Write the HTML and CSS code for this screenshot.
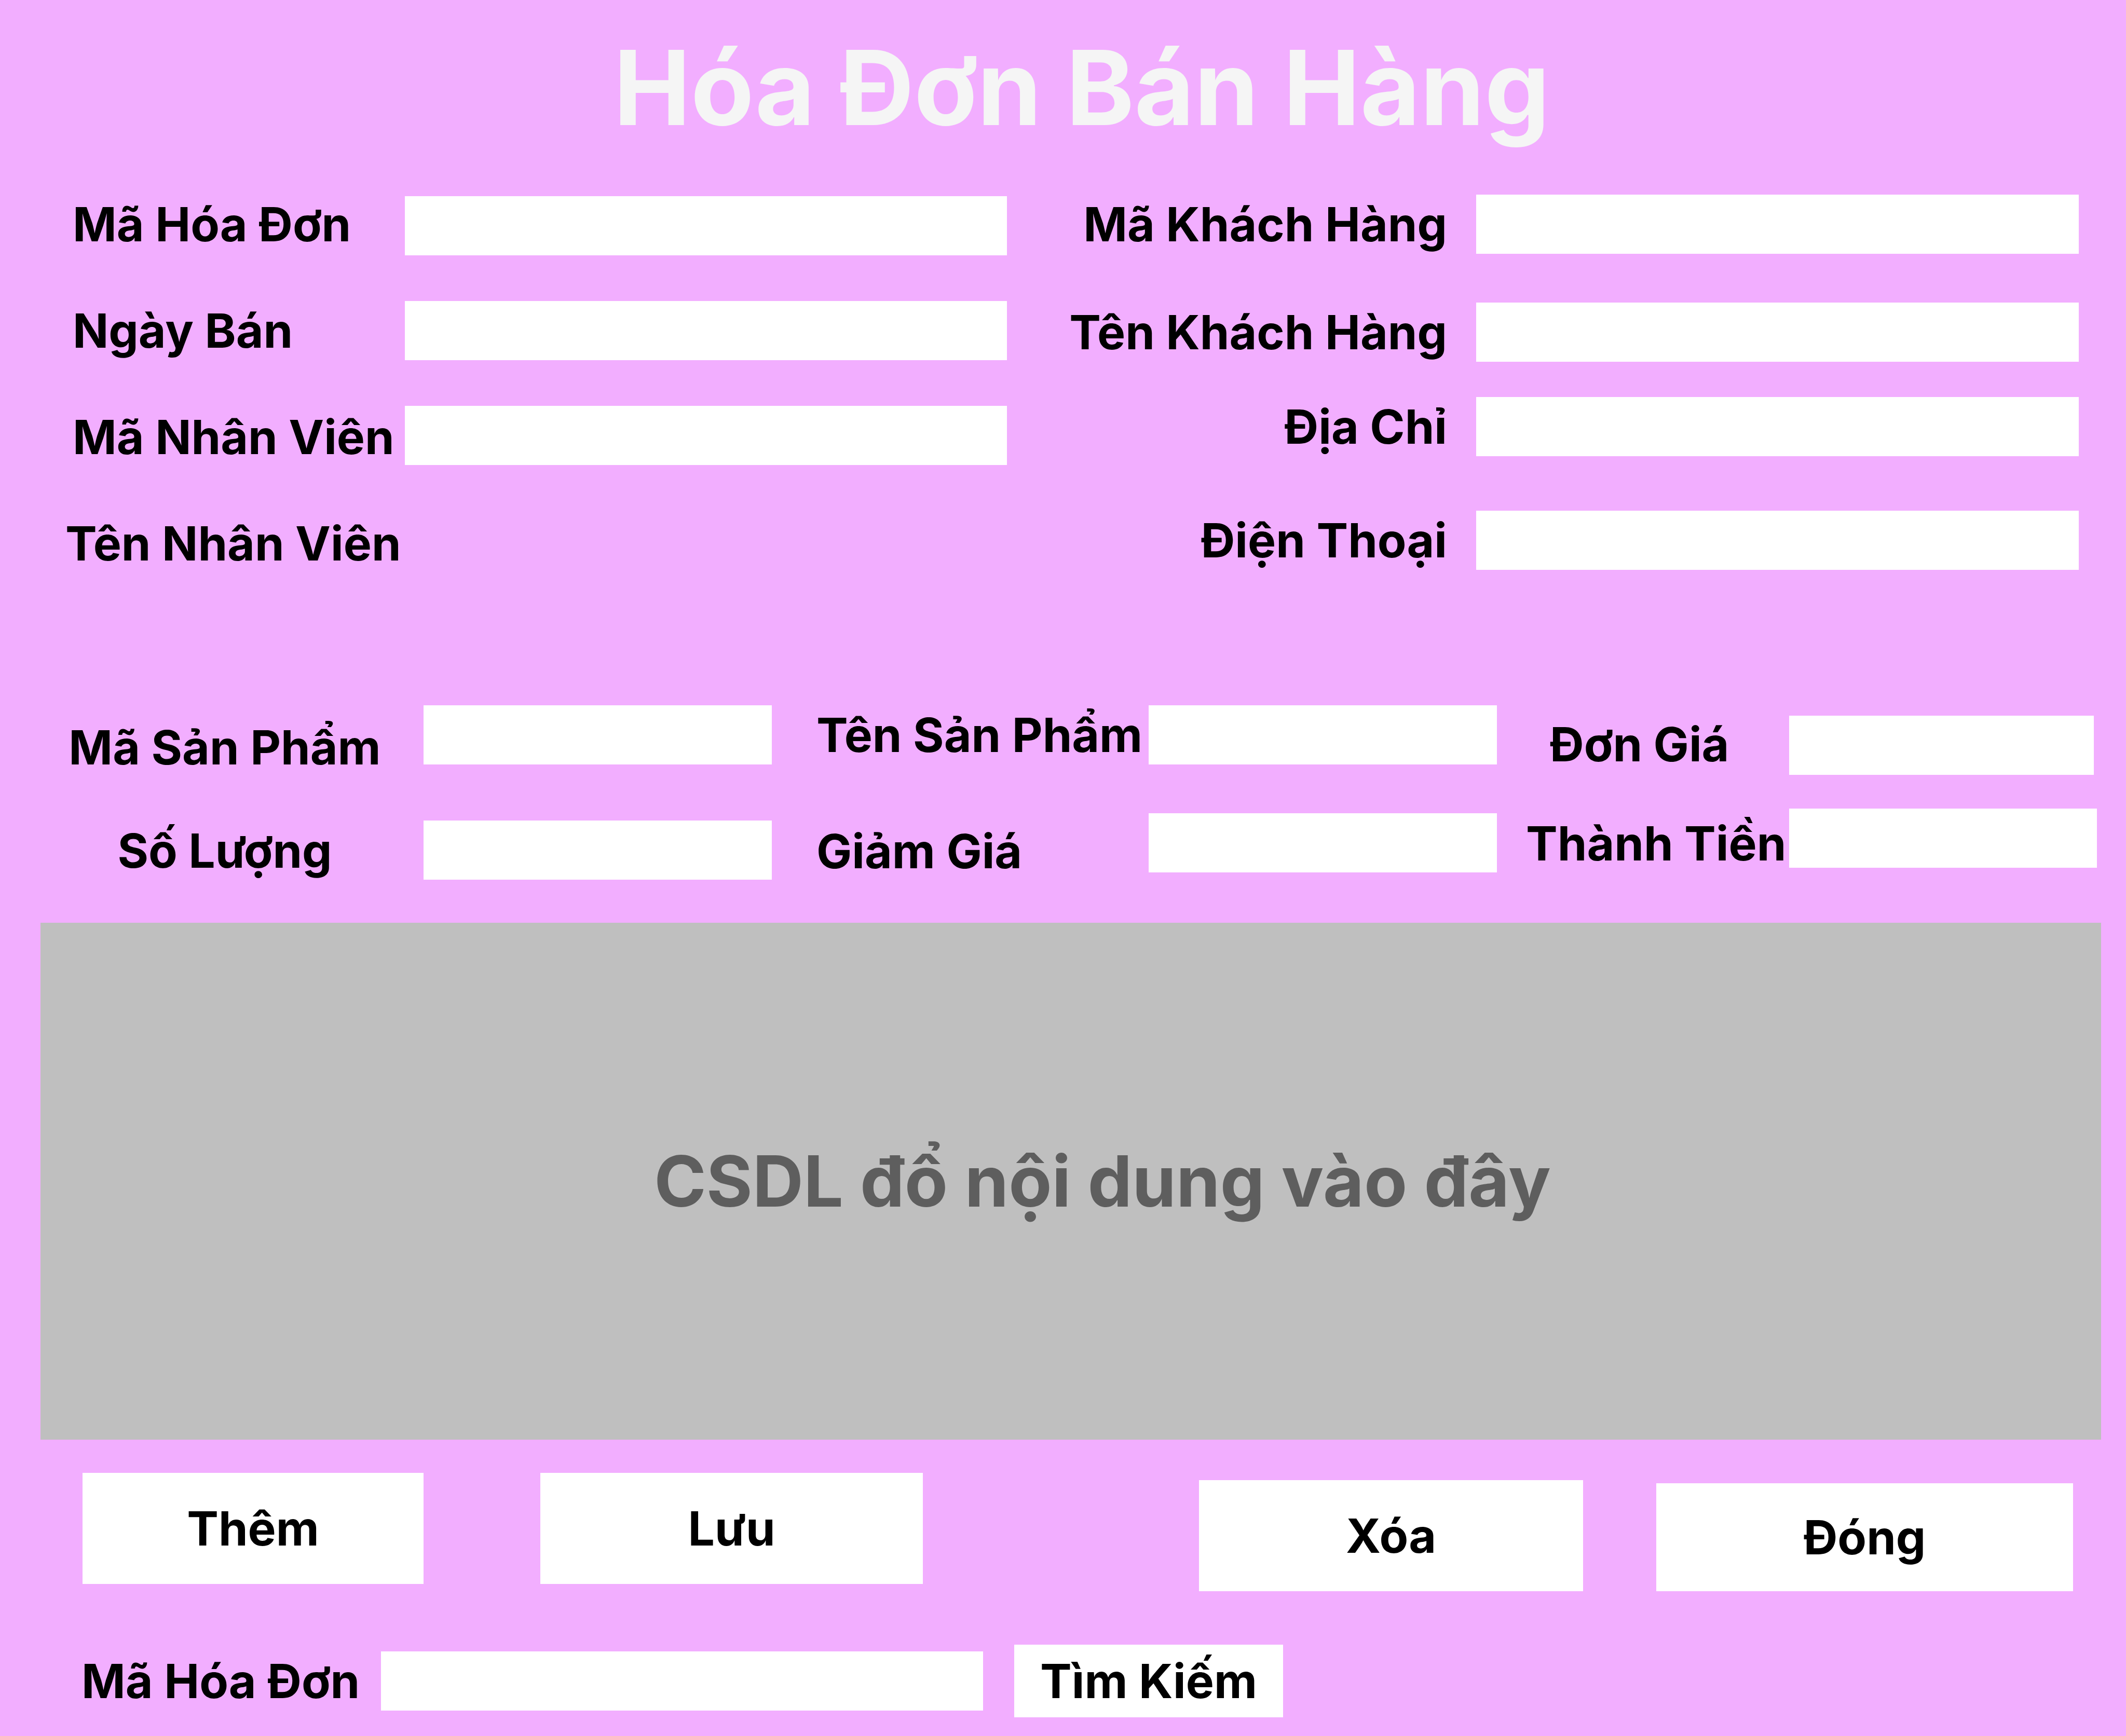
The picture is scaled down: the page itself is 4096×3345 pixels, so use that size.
FILE: index.html
```html
<!DOCTYPE html>
<html lang="vi">
<head>
  <meta charset="utf-8">
  <meta name="viewport" content="width=device-width, initial-scale=1">
  <title>Hóa Đơn Bán Hàng</title>
  <link rel="stylesheet" href="styles.css">
</head>
<body>
  <main class="page">
    <h1 class="title">Hóa Đơn Bán Hàng</h1>

    <form class="invoice">
      <div class="details">
        <div class="stack invoice-labels">
          <label for="invoice-id">Mã Hóa Đơn</label>
          <label for="sale-date">Ngày Bán</label>
          <label for="staff-id">Mã Nhân Viên</label>
          <p class="caption">Tên Nhân Viên</p>
        </div>
        <div class="stack invoice-inputs">
          <input id="invoice-id" type="text">
          <input id="sale-date" type="text">
          <input id="staff-id" type="text">
        </div>
        <div class="stack customer customer-labels">
          <label for="customer-id">Mã Khách Hàng</label>
          <label for="customer-name">Tên Khách Hàng</label>
          <label for="address">Địa Chỉ</label>
          <label for="phone">Điện Thoại</label>
        </div>
        <div class="stack customer">
          <input id="customer-id" type="text">
          <input id="customer-name" type="text">
          <input id="address" type="text">
          <input id="phone" type="tel">
        </div>
      </div>

      <div class="products">
        <div class="stack code-labels">
          <label for="product-id">Mã Sản Phẩm</label>
          <label for="quantity">Số Lượng</label>
        </div>
        <div class="stack code-inputs">
          <input id="product-id" type="text">
          <input id="quantity" type="text">
        </div>
        <div class="stack name-labels">
          <label for="product-name">Tên Sản Phẩm</label>
          <label for="discount">Giảm Giá</label>
        </div>
        <div class="stack name-inputs">
          <input id="product-name" type="text">
          <input id="discount" type="text">
        </div>
        <div class="stack price-labels">
          <label class="indent" for="unit-price">Đơn Giá</label>
          <label for="total">Thành Tiền</label>
        </div>
        <div class="stack price-inputs">
          <input class="unit-price" id="unit-price" type="text">
          <input id="total" type="text">
        </div>
      </div>

      <section class="records">
        <p>CSDL đổ nội dung vào đây</p>
      </section>

      <div class="actions">
        <div class="action-group">
          <button class="add" type="button">Thêm</button>
          <button class="save" type="button">Lưu</button>
        </div>
        <div class="action-group closing">
          <button class="delete" type="button">Xóa</button>
          <button class="close" type="button">Đóng</button>
        </div>
      </div>
    </form>

    <form class="search" role="search">
      <label for="search-id">Mã Hóa Đơn</label>
      <input id="search-id" type="text">
      <button type="submit">Tìm Kiếm</button>
    </form>
  </main>
</body>
</html>
```

FILE: styles.css
```css
* {
  box-sizing: border-box;
}

body {
  margin: 0;
  min-height: 100vh;
  background: #f2aeff;
  color: #000;
  font-family: Inter, "Liberation Sans", sans-serif;
  font-size: 91px;
  font-weight: 700;
  font-optical-sizing: none;
  line-height: 114px;
}

h1,
p {
  margin: 0;
}

input,
button {
  min-width: 0;
  margin: 0;
  border: 0;
  border-radius: 0;
  background: #fff;
  color: inherit;
  font: inherit;
}

input {
  width: 100%;
  height: 114px;
  padding: 0 24px;
}

button {
  padding: 0;
  cursor: pointer;
}

label,
.caption {
  white-space: nowrap;
}

.page {
  padding: 49px 0 36px;
}

.title {
  padding-left: 72px;
  color: #f5f5f5;
  font-size: 199px;
  line-height: 240px;
  text-align: center;
}

/* Labels and inputs run in side-by-side stacks, each with its own rhythm */
.stack {
  display: grid;
  align-content: start;
}

/* Invoice and customer details */
.details {
  display: grid;
  grid-template-columns: minmax(0, 654fr) minmax(0, 1160fr) minmax(0, 904fr) minmax(0, 1161fr);
  padding: 86px 91px 0 126px;
}

.invoice-labels {
  row-gap: 91px;
}

.invoice-labels label {
  padding-left: 14px;
}

.invoice-inputs {
  row-gap: 88px;
  padding-top: 3px;
}

.customer {
  grid-template-rows: 208px 182px 219px 114px;
}

.customer-labels {
  padding-right: 56px;
  text-align: right;
}

/* Product line */
.products {
  display: grid;
  grid-template-columns:
    minmax(0, 766fr) minmax(0, 671fr) minmax(0, 726fr)
    minmax(0, 671fr) minmax(0, 563fr) minmax(0, 593fr);
  padding: 255px 56px 0 50px;
}

.code-labels {
  row-gap: 85px;
  padding-top: 24px;
  text-align: center;
}

.code-inputs {
  row-gap: 108px;
}

.name-labels {
  row-gap: 110px;
  padding-left: 86px;
}

.name-inputs {
  row-gap: 94px;
}

.price-labels {
  row-gap: 77px;
  padding: 18px 0 0 56px;
}

.price-labels .indent {
  padding-left: 46px;
}

.price-inputs {
  row-gap: 65px;
  padding-top: 20px;
}

.unit-price {
  width: 99%;
}

/* Record list area */
.records {
  display: grid;
  place-items: center;
  min-height: 996px;
  margin: 81px 48px 0 78px;
  padding-left: 122px;
  background: #bfbfbf;
  color: #5e5e5e;
  font-size: 136px;
  line-height: 168px;
}

/* Form actions */
.actions {
  display: flex;
  justify-content: space-between;
  align-items: flex-start;
  padding: 64px 102px 0 159px;
}

.action-group {
  display: flex;
  align-items: flex-end;
  gap: 225px;
}

.closing {
  gap: 141px;
  padding-top: 14px;
}

.action-group button {
  height: 214px;
}

.add {
  width: 657px;
}

.save {
  width: 737px;
}

.delete {
  width: 740px;
}

.action-group .close {
  width: 803px;
  height: 208px;
}

/* Search */
.search {
  display: flex;
  align-items: center;
  padding: 103px 102px 0 157px;
}

.search label {
  width: 577px;
}

.search input {
  width: 1160px;
}

.search button {
  width: 518px;
  height: 140px;
  margin-left: 60px;
}
```
